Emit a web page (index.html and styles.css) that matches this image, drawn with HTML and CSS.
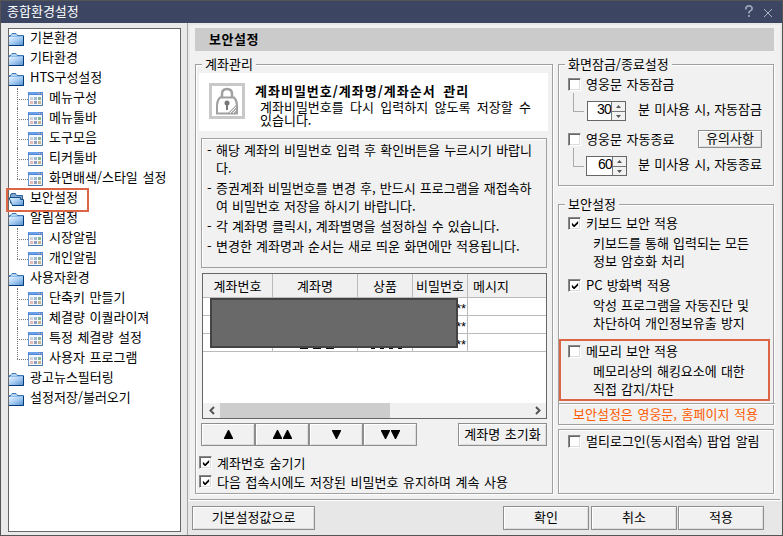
FILE: index.html
```html
<!DOCTYPE html>
<html lang="ko">
<head>
<meta charset="utf-8">
<title>종합환경설정</title>
<link rel="stylesheet" href="styles.css">
</head>
<body>
<svg class="defs" width="0" height="0">
  <defs>
    <linearGradient id="blue" x1="0" y1="0" x2="1" y2="1"><stop offset="0" stop-color="#e6f3ff"/><stop offset=".45" stop-color="#acd0f4"/><stop offset="1" stop-color="#5c93d0"/></linearGradient>
    <symbol id="folder" viewBox="0 0 15 13">
      <path d="M.5 12V2.5H2V1.500H3V.5H7V1.500H8V2.500H14.500V12.500H.5Z" fill="#8fbce8" stroke="#3c79b4"/>
      <path d="M0 4h14v8H0z" fill="url(#blue)"/><path d="M0 12.500H14.500V3" fill="none" stroke="#003c79"/><path d="M2 2h6" stroke="#d8ecff"/>
    </symbol>
    <symbol id="open" viewBox="0 0 15 13">
      <path d="M1.500 10V1.500H2.500V.5H6.500V1.500L8 2.500H13.500V11Z" fill="#7fa7d1" stroke="#2e6198"/>
      <path d="M.5 4.500H11.500V6.500H14.500V12.500H3.500L2.500 10.500L.5 6Z" fill="url(#blue)" stroke="#164f88"/><path d="M3 12.500H14.500V7" stroke="#003c79" fill="none"/>
    </symbol>
    <symbol id="page" viewBox="0 0 15 14">
      <path d="M.5.5h14v13H.5z" fill="#f4f7fc" stroke="#6796d4"/><path d="M0 0h15v3H0z" fill="#5389dc"/><path d="M1 1h10" stroke="#85b5f5"/><path d="M11 1h1v1h-1zM13 1h1v1h-1z" fill="#ffb08a"/><path d="M14.500 3v10.500H0" stroke="#4c78b0" fill="none"/>
      <path d="M2 5h3v3H2z" fill="#cbd0df"/><path d="M6 5h3v3H6z" fill="#9fbad2"/><path d="M10 5h3v3h-3z" fill="#8cb492"/><path d="M2 9h3v3H2z" fill="#e4bbb8"/><path d="M6 9h3v3H6z" fill="#8f9dbd"/><path d="M10 9h3v3h-3z" fill="#c6b58b"/>
    </symbol>
    <symbol id="check" viewBox="0 0 9 9"><path d="M1 3v3l2 2h1l4-4V1L3.500 5.500Z" fill="#000"/></symbol>
  </defs>
</svg>
<div class="window">
  <header class="titlebar"><span>종합환경설정</span>
    <svg class="win-icons" width="28" height="13" viewBox="0 0 28 13" fill="none" stroke="#aab1c4"><path d="M1 4.500V2.500L2.500 1H5.500L7 2.500V4.500L4 7V8.500M4 10v2" stroke-width="1.500"/><path d="M19 4l8 8M27 4l-8 8" stroke-width="1"/></svg>
  </header>
  <div class="body">
    <nav class="tree">
      <div class="node"><svg class="folder"><use href="#folder"/></svg>기본환경</div>
      <div class="node"><svg class="folder"><use href="#folder"/></svg>기타환경</div>
      <div class="node"><svg class="folder"><use href="#folder"/></svg>HTS구성설정</div>
      <div class="children">
        <div class="leaf"><i></i><svg><use href="#page"/></svg>메뉴구성</div>
        <div class="leaf"><i></i><svg><use href="#page"/></svg>메뉴툴바</div>
        <div class="leaf"><i></i><svg><use href="#page"/></svg>도구모음</div>
        <div class="leaf"><i></i><svg><use href="#page"/></svg>티커툴바</div>
        <div class="leaf"><i></i><svg><use href="#page"/></svg>화면배색/스타일 설정</div>
      </div>
      <div class="node current"><svg class="folder"><use href="#open"/></svg>보안설정</div>
      <div class="node"><svg class="folder"><use href="#folder"/></svg>알림설정</div>
      <div class="children">
        <div class="leaf"><i></i><svg><use href="#page"/></svg>시장알림</div>
        <div class="leaf"><i></i><svg><use href="#page"/></svg>개인알림</div>
      </div>
      <div class="node"><svg class="folder"><use href="#folder"/></svg>사용자환경</div>
      <div class="children">
        <div class="leaf"><i></i><svg><use href="#page"/></svg>단축키 만들기</div>
        <div class="leaf"><i></i><svg><use href="#page"/></svg>체결량 이퀄라이져</div>
        <div class="leaf"><i></i><svg><use href="#page"/></svg>특정 체결량 설정</div>
        <div class="leaf"><i></i><svg><use href="#page"/></svg>사용자 프로그램</div>
      </div>
      <div class="node"><svg class="folder"><use href="#folder"/></svg>광고뉴스필터링</div>
      <div class="node"><svg class="folder"><use href="#folder"/></svg>설정저장/불러오기</div>
    </nav>
    <main class="main">
      <div class="panel">
        <h1 class="heading">보안설정</h1>
        <div class="columns">
          <section class="group accounts">
            <h2 class="legend">계좌관리</h2>
            <div class="banner">
              <div class="lock"><svg width="30" height="30" viewBox="0 0 30 30"><path d="M10 12V8q0-5 5-5t5 5v4" fill="none" stroke="#a0a0a0" stroke-width="2.500"/><path d="M8 11.500h14q3 3 3 8v8H5v-8q0-5 3-8Z" fill="#fff" stroke="#a0a0a0" stroke-width="2"/><circle cx="15" cy="17" r="2.500" fill="#777"/><path d="M15 18v6" stroke="#777" stroke-width="2"/><path d="M24 19L16 27h8Z" fill="#aaa"/><path d="M18 27l6-6M21 27l3-3" stroke="#fff"/></svg></div>
              <div class="banner-text"><b>계좌비밀번호/계좌명/계좌순서 관리</b><p>계좌비밀번호를 다시 입력하지 않도록 저장할 수<br>있습니다.</p></div>
            </div>
            <ul class="notes">
              <li>해당 계좌의 비밀번호 입력 후 확인버튼을 누르시기 바랍니<br>다.</li>
              <li>증권계좌 비밀번호를 변경 후, 반드시 프로그램을 재접속하<br>여 비밀번호 저장을 하시기 바랍니다.</li>
              <li>각 계좌명 클릭시, 계좌별명을 설정하실 수 있습니다.</li>
              <li>변경한 계좌명과 순서는 새로 띄운 화면에만 적용됩니다.</li>
            </ul>
            <div class="grid">
              <div class="row head"><span>계좌번호</span><span>계좌명</span><span>상품</span><span>비밀번호</span><span class="msg">메시지</span></div>
              <div class="row"><span></span><span></span><span></span><span class="pw">**</span><span></span></div>
              <div class="row"><span></span><span></span><span></span><span class="pw">**</span><span></span></div>
              <div class="row"><span></span><span class="marks"><i></i><i></i><i></i></span><span class="marks small"><i></i><i></i><i></i><i></i></span><span class="pw">**</span><span></span></div>
              <div class="mask"></div>
              <div class="scroll"><svg width="17" height="15"><path d="M11 4L7.500 7.500L11 11" /></svg><div class="thumb"></div><svg width="17" height="15"><path d="M7 4L10.500 7.500L7 11"/></svg></div>
            </div>
            <div class="order">
              <button><svg width="9" height="9"><path d="M4 0h1l4 8v1H0V8Z"/></svg></button>
              <button><svg width="9" height="9"><path d="M4 0h1l4 8v1H0V8Z"/></svg><svg width="9" height="9"><path d="M4 0h1l4 8v1H0V8Z"/></svg></button>
              <button><svg width="9" height="9"><path d="M0 0h9v1L5 9H4L0 1Z"/></svg></button>
              <button><svg width="9" height="9"><path d="M0 0h9v1L5 9H4L0 1Z"/></svg><svg width="9" height="9"><path d="M0 0h9v1L5 9H4L0 1Z"/></svg></button>
              <button class="reset">계좌명 초기화</button>
            </div>
            <div class="checkline first"><span class="box"><svg><use href="#check"/></svg></span>계좌번호 숨기기</div>
            <div class="checkline"><span class="box"><svg><use href="#check"/></svg></span>다음 접속시에도 저장된 비밀번호 유지하며 계속 사용</div>
          </section>
          <div class="side">
            <section class="group timers">
              <h2 class="legend">화면잠금/종료설정</h2>
              <div class="checkline"><span class="box"></span>영웅문 자동잠금</div>
              <div class="timer"><i class="elbow"></i><span class="spin"><b>30</b><span class="steps"><i><svg width="5" height="3"><path d="M0 3L2.500 0L5 3Z"/></svg></i><i><svg width="5" height="3"><path d="M0 0L2.500 3L5 0Z"/></svg></i></span></span><span class="timer-text">분 미사용 시, 자동잠금</span></div>
              <div class="checkline second"><span class="box"></span>영웅문 자동종료<button class="notice">유의사항</button></div>
              <div class="timer"><i class="elbow"></i><span class="spin wide"><b>60</b><span class="steps"><i><svg width="5" height="3"><path d="M0 3L2.500 0L5 3Z"/></svg></i><i><svg width="5" height="3"><path d="M0 0L2.500 3L5 0Z"/></svg></i></span></span><span class="timer-text">분 미사용 시, 자동종료</span></div>
            </section>
            <section class="group security">
              <h2 class="legend">보안설정</h2>
              <div class="option"><div class="checkline"><span class="box"><svg><use href="#check"/></svg></span>키보드 보안 적용</div><p>키보드를 통해 입력되는 모든<br>정보 암호화 처리</p></div>
              <div class="option firewall"><div class="checkline"><span class="box"><svg><use href="#check"/></svg></span>PC 방화벽 적용</div><p>악성 프로그램을 자동진단 및<br>차단하여 개인정보유출 방지</p></div>
              <div class="option memory"><div class="checkline"><span class="box"></span>메모리 보안 적용</div><p>메모리상의 해킹요소에 대한<br>직접 감지/차단</p></div>
              <p class="scope">보안설정은 영웅문, 홈페이지 적용</p>
            </section>
            <section class="group multi"><div class="checkline"><span class="box"></span>멀티로그인(동시접속) 팝업 알림</div></section>
          </div>
        </div>
      </div>
      <footer class="footer"><button class="defaults">기본설정값으로</button><button class="ok">확인</button><button class="cancel">취소</button><button class="apply">적용</button></footer>
    </main>
  </div>
</div>
</body>
</html>
```
FILE: styles.css
```css
*, *::before, *::after { box-sizing: border-box; }
body { margin: 0; font: 13px/18px "Noto Sans CJK KR", sans-serif; word-spacing: 1px; color: #000; white-space: nowrap; overflow: hidden; }
svg { display: block; flex: none; }
h1, h2, p, ul { margin: 0; padding: 0; font-size: 13px; font-weight: 400; }
.defs { position: absolute; }
.window { width: 783px; height: 536px; border: 1px solid #555; background: #e9e9e9; }
.titlebar { height: 22px; display: flex; align-items: center; justify-content: space-between; padding: 0 9px 3px 6px; background: #3c4663; color: #fff; }
.win-icons { margin-top: 2px; }
.body { display: flex; height: 512px; }
.tree { width: 173px; height: 504px; margin: 5px 0 0 7px; border: 1px solid #666; background: #fff; }
.node { display: flex; height: 20px; align-items: center; padding-bottom: 2px; }
.node:first-child { margin-top: -1px; }
.folder { width: 15px; height: 13px; margin: 5px 6px 0 0; }
.current { position: relative; }
.current::after { content: ""; position: absolute; left: -3px; top: 0; width: 83px; height: 24px; border: 2px solid #dc6545; }
.children { padding-left: 8px; }
.leaf { display: flex; height: 20px; align-items: center; padding-bottom: 2px; position: relative; }
.leaf::before { content: ""; position: absolute; left: 0; top: 0; bottom: 0; border-left: 1px dotted #777; }
.leaf:last-child::before { bottom: 9px; }
.leaf > i { width: 11px; border-top: 1px dotted #777; margin-top: 4px; }
.leaf > svg { width: 15px; height: 14px; margin: 4px 6px 0 0; }
.main { flex: 1; margin-left: 6px; border-left: 1px solid #a5a5a5; }
.panel { height: 477px; margin: 0 2px; padding: 3px 6px 0 5px; background: #f1f1f1; border-top: 2px solid #e7e7e7; border-bottom: 1px solid #a0a0a0; }
.heading { height: 23px; padding-left: 14px; background: #cbcbcb; font-weight: 700; line-height: 22px; letter-spacing: .5px; }
.columns { display: flex; gap: 5px; margin-top: 13px; }
.group { border: 1px solid #a0a0a0; box-shadow: 1px 1px #fff, inset 1px 1px #fff; }
.legend { width: max-content; height: 18px; margin: -10px 0 0 6px; padding: 0 3px; background: #f1f1f1; }
.accounts { width: 358px; height: 430px; }
.banner { display: flex; width: 349px; height: 58px; margin: 0 0 0 3px; padding-left: 10px; background: #fff; }
.lock { width: 36px; height: 36px; margin-top: 10px; border: 3px solid #c8c8c8; }
.banner-text { margin: 9px 0 0 10px; line-height: 18px; }
.banner-text b { display: block; letter-spacing: 1px; word-spacing: 3px; }
.banner-text p { margin: 0 0 0 5px; line-height: 13px; word-spacing: 2.7px; }
.notes { width: 346px; height: 130px; margin: 7px 0 0 5px; padding: 2px 0 0 14px; border: 1px solid #a0a0a0; box-shadow: inset 1px 1px #fff; list-style: none; word-spacing: .5px; }
.notes li { margin-bottom: 2px; }
.notes li::before { content: "-"; float: left; margin-left: -9px; }
.grid { position: relative; display: flex; flex-direction: column; width: 345px; height: 146px; margin: 5px 0 0 6px; border: 1px solid #666; background: #fff; }
.row { display: grid; grid-template-columns: 70px 85px 55px 55px 1fr; grid-template-rows: 100%; height: 18px; flex: none; }
.row span { border-right: 1px solid #bbb; border-bottom: 1px solid #bbb; }
.row span:last-child { border-right: 0; }
.head { height: 24px; background: #f0f0f0; text-align: center; line-height: 23px; }
.head .msg { text-align: left; padding-left: 5px; }
.row .pw { text-align: right; padding-right: 1px; font-family: "Liberation Sans", sans-serif; line-height: 22px; }
.marks { display: flex; justify-content: center; align-items: flex-end; gap: 5px; padding: 0 0 2px 3px; }
.marks i { width: 8px; height: 1px; background: #111; }
.marks.small i { width: 4px; }
.mask { position: absolute; left: 7px; top: 24px; width: 248px; height: 50px; border: 2px solid #444; background: #696969; }
.scroll { display: flex; height: 15px; margin-top: auto; background: #f0f0f0; justify-content: space-between; }
.scroll path { fill: none; stroke: #555; stroke-width: 2; }
.thumb { width: 170px; margin-right: auto; background: #cdcdcd; }
button { display: flex; align-items: center; justify-content: center; height: 23px; padding: 0 0 2px; border: 1px solid #8e8e8e; background: #f1f1f1; box-shadow: inset 1px 1px #fff, inset -1px -1px #ddd; color: #000; font: inherit; word-spacing: inherit; }
.order { display: flex; margin: 4px 0 0 5px; width: 346px; }
.order button { width: 54px; gap: 1px; padding-top: 1px; }
.order .reset { width: 89px; margin-left: auto; padding-top: 0; }
.checkline { display: flex; height: 18px; align-items: center; }
.box { width: 13px; height: 13px; margin-right: 5px; flex: none; border: 1px solid #fff; border-top-color: #888; border-left-color: #888; background: #fff; box-shadow: inset 1px 1px #666, inset -1px -1px #ddd; padding: 2px; }
.box svg { width: 8px; height: 8px; }
.accounts .checkline { margin-left: 3px; height: 19px; }
.accounts .first { margin-top: 7px; }
.side { width: 216px; }
.timers { height: 122px; }
.timers .checkline { margin: 2px 0 0 9px; }
.timer { display: flex; height: 30px; }
.elbow { width: 11px; height: 19px; margin-left: 14px; border-left: 1px solid #aaa; border-bottom: 1px solid #aaa; }
.spin { display: flex; width: 39px; height: 20px; margin: 8px 0 0 3px; border: 1px solid #666; background: #fff; }
.spin.wide { width: 41px; margin-left: 2px; }
.spin b { flex: 1; text-align: right; font: 14px/15px "Liberation Sans", sans-serif; letter-spacing: -.8px; }
.steps { width: 14px; border-left: 1px solid #777; background: #f1f1f1; }
.steps > i { display: flex; height: 9px; align-items: center; justify-content: center; }
.steps > i + i { border-top: 1px solid #777; }
.steps path { fill: #555; }
.timer-text { margin: 7px 0 0 12px; word-spacing: .6px; }
.wide + .timer-text { margin-left: 11px; }
.timers .second { margin-top: 7px; }
.notice { width: 64px; height: 18px; margin-left: auto; margin-right: 11px; }
.security { height: 221px; margin-top: 18px; }
.option { height: 62px; word-spacing: .5px; }
.security > h2 + .option { margin-top: 1px; }
.option .checkline { margin-left: 9px; }
.option p { margin: 2px 0 0 34px; }
.firewall { height: 66px; }
.memory { position: relative; height: 61px; }
.memory::after { content: ""; position: absolute; left: 0; top: -3px; width: 211px; height: 62px; border: 2px solid #dc6545; }
.scope { height: 22px; padding: 0 0 0 14px; margin-right: -2px; border-top: 1px solid #a0a0a0; box-shadow: inset 0 1px #fff; color: #ff5c00; line-height: 20px; }
.multi { height: 65px; margin-top: 4px; padding: 2px 0 0 9px; }
.footer { display: flex; height: 35px; padding: 5px 0 0 4px; border-top: 1px solid #fff; background: #e7e7e7; }
.footer button { width: 86px; height: 24px; }
.footer .defaults { width: 123px; }
.footer .ok { margin: 0 2px 0 auto; }
.footer .cancel { margin-right: 1px; }
.footer .apply { margin-right: 18px; }
```
